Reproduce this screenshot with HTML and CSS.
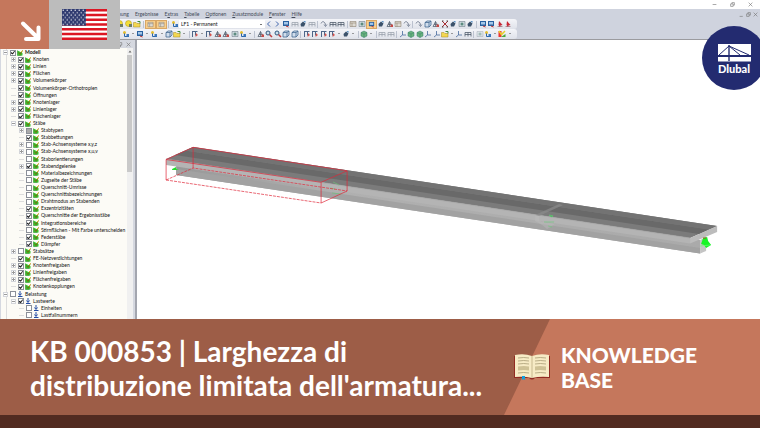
FILE: index.html
```html
<!DOCTYPE html>
<html lang="it">
<head>
<meta charset="utf-8">
<meta name="viewport" content="width=device-width, initial-scale=1">
<title>KB 000853 | Dlubal</title>
<link rel="stylesheet" href="styles.css">
</head>
<body>
<svg class="defs" aria-hidden="true">
  <symbol id="model" viewBox="0 0 12 12"><path d="M1 1v10h10V6z" fill="#35c52b"/><path d="M1 1v10h8" stroke="#14801c" fill="none"/><path d="M3 5l3 4 5-8" stroke="#7b6412" stroke-width="2" fill="none"/><path d="M8 4l3-3" stroke="#e5c22c" stroke-width="2"/></symbol>
  <symbol id="load" viewBox="0 0 12 12"><path d="M6 0v8M3 5l3 4 3-4M2 11h9" stroke="#244ca5" stroke-width="2" fill="none"/></symbol>
  <symbol id="coin" viewBox="0 0 16 16"><circle cx="7" cy="7" r="6" fill="#f3dd38" stroke="#a89016"/><path d="M8 8h6v6H8z" fill="#6d7d65"/></symbol>
  <symbol id="folder" viewBox="0 0 16 16"><path d="M1 5h5l2 2h6v7H1z" fill="#f3d750" stroke="#a48a20"/><path d="M9 3h5v4" stroke="#3e8b3c" stroke-width="2" fill="none"/></symbol>
  <symbol id="sheet" viewBox="0 0 16 16"><path d="M2 3h12v10H2z" fill="#dedbd4" stroke="#81735f"/><path d="M2 6h12M6 6v7" stroke="#81735f"/></symbol>
  <symbol id="node" viewBox="0 0 16 16"><circle cx="5" cy="5" r="3" fill="#e3bd2c"/><path d="M5 7v6h9" stroke="#2865a8" stroke-width="2" fill="none"/><path d="M9 8h5v5H9z" fill="#3d79bd"/></symbol>
  <symbol id="cube" viewBox="0 0 16 16"><path d="M2 5l4-3h8v8l-4 4H2zM2 5h8v9M10 5l4-3" fill="#d0ddec" stroke="#3c638d" stroke-width="1.5"/></symbol>
  <symbol id="bluebox" viewBox="0 0 16 16"><path d="M2 2h12v10H2z" fill="#2861a0"/><path d="M4 4h8v5H4z" fill="#a3c6e8"/><path d="M8 12l5 2" stroke="#bb3131" stroke-width="2"/></symbol>
  <symbol id="frame" viewBox="0 0 16 16"><path d="M2 13V5h12v8M2 9h12M8 5v8" fill="none" stroke="#4a5666" stroke-width="1.5"/></symbol>
  <symbol id="truss" viewBox="0 0 16 16"><path d="M2 13l5-10 6 10zM4 9h7M7 3v10" fill="none" stroke="#53606f" stroke-width="1.5"/><path d="M9 9h5v5H9z" fill="#c64a45"/></symbol>
  <symbol id="lens" viewBox="0 0 16 16"><circle cx="6" cy="6" r="4" fill="#c9e0ed" stroke="#34597e" stroke-width="2"/><path d="M9 9l5 5" stroke="#bd3b3c" stroke-width="3"/></symbol>
  <symbol id="redx" viewBox="0 0 16 16"><path d="M2 2l12 12M14 2L2 14" stroke="#a92f35" stroke-width="2"/><path d="M2 2h3M11 2h3M2 14h3M11 14h3" stroke="#444" stroke-width="2"/></symbol>
  <symbol id="redpin" viewBox="0 0 16 16"><path d="M6 2l7 8-4 1-1 3-3-4z" fill="#c82937"/><path d="M3 13h10" stroke="#763541"/></symbol>
  <symbol id="rotate" viewBox="0 0 16 16"><path d="M2 7c3-7 9-3 9 4M8 9l3 4 3-4" fill="none" stroke="#647085" stroke-width="1.6"/></symbol>
  <symbol id="axis" viewBox="0 0 16 16"><path d="M7 2v8h7M7 10l-5 4" fill="none" stroke="#466a9d" stroke-width="1.6"/></symbol>
  <symbol id="target" viewBox="0 0 16 16"><path d="M2 3h12v10H2z" fill="#ccd9dd" stroke="#60717d"/><circle cx="8" cy="8" r="3" fill="#5d8b80"/></symbol>
  <symbol id="dark" viewBox="0 0 16 16"><path d="M3 8l5-5 5 4-3 6H4z" fill="#3b526b"/><path d="M9 2h4v4" fill="#4b87c0"/></symbol>
  <symbol id="flag" viewBox="0 0 16 16"><path d="M3 2v12M3 3h10M9 3v8" stroke="#4e6789" stroke-width="2"/><path d="M10 6l4 4-5 4z" fill="#d6534b"/></symbol>
  <symbol id="green" viewBox="0 0 16 16"><path d="M2 5l6-3 6 3v7l-6 3-6-3z" fill="#69b37d" stroke="#347e68"/><path d="M2 5l6 3 6-3M8 8v7" stroke="#347e68" fill="none"/></symbol>
  <symbol id="colors" viewBox="0 0 16 16"><path d="M1 2h6v12H1z" fill="#e33"/><path d="M6 14h9V8z" fill="#4ba83a"/><path d="M2 2l5 7 7-7" stroke="#e9cf2a" stroke-width="3" fill="none"/></symbol>
</svg>

<main class="app">
  <header class="chrome">
    <div class="titlebar">
      <button aria-label="Minimieren"><svg viewBox="0 0 8 8"><path d="M1 4h6"/></svg></button>
      <button aria-label="Verkleinern"><svg viewBox="0 0 8 8"><path d="M1 3h4v4H1zM3 3V1h4v4H5"/></svg></button>
      <button aria-label="Schließen"><svg viewBox="0 0 8 8"><path d="M1 1l6 6M7 1L1 7"/></svg></button>
    </div>
    <nav class="menubar">
      <a href="#">nung</a><a href="#">Ergebnisse</a><a href="#">E<u>x</u>tras</a><a href="#"><u>T</u>abelle</a><a href="#"><u>O</u>ptionen</a><a href="#"><u>Z</u>usatzmodule</a><a href="#"><u>F</u>enster</a><a href="#"><u>H</u>ilfe</a>
      <span class="mdi"><svg viewBox="0 0 8 8"><path d="M1 7h5"/></svg><svg viewBox="0 0 8 8"><path d="M1 3h4v4H1zM3 3V1h4v4H5"/></svg><svg viewBox="0 0 8 8"><path d="M1 1l6 6M7 1L1 7"/></svg></span>
    </nav>
    <div class="toolbar">
      <button aria-label="Neu"><svg><use href="#coin"/></svg></button><button aria-label="Modell"><svg><use href="#coin"/></svg></button><button aria-label="Öffnen"><svg><use href="#folder"/></svg></button><i></i>
      <button class="on" aria-label="Navigator"><svg><use href="#sheet"/></svg></button><button class="on" aria-label="Tabelle"><svg><use href="#sheet"/></svg></button><i></i>
      <button aria-label="Lastfall"><svg><use href="#node"/></svg></button>
      <select aria-label="Lastfall wählen"><option>LF1 - Permanent</option></select>
      <button aria-label="Zurück"><svg viewBox="0 0 16 16"><path d="M10 3L5 8l5 5" class="arrow"/></svg></button><button aria-label="Weiter"><svg viewBox="0 0 16 16"><path d="M6 3l5 5-5 5" class="arrow"/></svg></button>
      <button aria-label="Lasten"><svg><use href="#bluebox"/></svg></button><button aria-label="Raster"><svg class="dim"><use href="#frame"/></svg></button><button aria-label="Werte"><svg><use href="#dark"/></svg></button><button aria-label="Maße"><svg class="dim"><use href="#frame"/></svg></button><i></i>
      <button aria-label="Verlauf"><svg><use href="#rotate"/></svg></button><button aria-label="Lager"><svg><use href="#frame"/></svg></button><button aria-label="Balken"><svg><use href="#frame"/></svg></button><i></i>
      <button aria-label="Liste"><svg><use href="#sheet"/></svg></button><button aria-label="Ansicht"><svg><use href="#target"/></svg></button><button class="on" aria-label="Rendern"><svg><use href="#bluebox"/></svg></button><button aria-label="Volumen"><svg><use href="#dark"/></svg></button><button aria-label="Kontakt"><svg><use href="#truss"/></svg></button><button aria-label="Drucken"><svg><use href="#sheet"/></svg></button><button aria-label="Bericht"><svg><use href="#rotate"/></svg></button><i></i>
      <button aria-label="Drehen"><svg><use href="#rotate"/></svg></button><button aria-label="Verschieben"><svg><use href="#cube"/></svg></button><button aria-label="Spiegeln"><svg><use href="#truss"/></svg></button><button aria-label="Löschen"><svg><use href="#redx"/></svg></button><button aria-label="Kugel"><svg><use href="#dark"/></svg></button><button aria-label="Ziel"><svg><use href="#target"/></svg></button><button aria-label="Verbinden"><svg><use href="#dark"/></svg></button><i></i>
      <button aria-label="Modul 1"><svg><use href="#bluebox"/></svg></button><button aria-label="Modul 2"><svg><use href="#bluebox"/></svg></button><button aria-label="Modul 3"><svg><use href="#redpin"/></svg></button><button aria-label="Modul 4"><svg><use href="#redpin"/></svg></button>
    </div>
    <div class="toolbar second">
      <button class="drop" aria-label="Knoten"><svg><use href="#node"/></svg></button><button class="drop" aria-label="Rahmen"><svg><use href="#bluebox"/></svg></button><button class="drop" aria-label="Linie"><svg><use href="#node"/></svg></button><button aria-label="Fläche"><svg><use href="#cube"/></svg></button><button class="drop" aria-label="Körper"><svg><use href="#folder"/></svg></button><i></i>
      <button class="drop" aria-label="Stab"><svg><use href="#flag"/></svg></button><button aria-label="Rippe"><svg><use href="#flag"/></svg></button><button aria-label="Fachwerk"><svg><use href="#truss"/></svg></button><button aria-label="Fachwerk 2"><svg><use href="#truss"/></svg></button><button aria-label="Seite"><svg><use href="#target"/></svg></button><button class="drop" aria-label="Gelenk"><svg><use href="#node"/></svg></button><i></i>
      <button aria-label="Auswahl"><svg><use href="#truss"/></svg></button><button aria-label="Zoom"><svg><use href="#lens"/></svg></button><button aria-label="Zoom plus"><svg><use href="#lens"/></svg></button><button aria-label="Würfel"><svg><use href="#cube"/></svg></button><button aria-label="Isometrie"><svg><use href="#cube"/></svg></button><i></i>
      <button aria-label="X"><svg><use href="#flag"/></svg></button><button aria-label="Y"><svg><use href="#flag"/></svg></button><button aria-label="Z"><svg><use href="#flag"/></svg></button><button class="drop" aria-label="-X"><svg><use href="#flag"/></svg></button><button class="drop" aria-label="Schnitt"><svg><use href="#dark"/></svg></button><i></i>
      <button class="drop" aria-label="Darstellung"><svg><use href="#green"/></svg></button><i></i><button aria-label="Profil"><svg class="dim"><use href="#frame"/></svg></button><button aria-label="Seil"><svg class="dim"><use href="#frame"/></svg></button><i></i>
      <button aria-label="Achse"><svg><use href="#axis"/></svg></button><button aria-label="Netz"><svg><use href="#green"/></svg></button><button aria-label="Netz 2"><svg><use href="#green"/></svg></button><button aria-label="Achse 2"><svg><use href="#axis"/></svg></button><button aria-label="Achse 3"><svg><use href="#axis"/></svg></button><button class="drop" aria-label="Ebene"><svg><use href="#folder"/></svg></button><button aria-label="Achse 4"><svg><use href="#axis"/></svg></button><button aria-label="Gitter"><svg><use href="#frame"/></svg></button><i></i>
      <button aria-label="Blatt"><svg class="dim"><use href="#target"/></svg></button><button class="drop" aria-label="Stift"><svg><use href="#node"/></svg></button><button class="drop" aria-label="Farben"><svg><use href="#colors"/></svg></button>
    </div>
  </header>

  <div class="workspace">
    <aside class="navigator">
      <div class="panel-head"><svg viewBox="0 0 8 8"><path d="M2 1h4v4H2zM4 5v3"/></svg><svg viewBox="0 0 8 8"><path d="M1 1l6 6M7 1L1 7"/></svg></div>
      <div class="panel-body">
        <ul class="tree">
          <li class="l0 root"><b class="open"></b><label><input type="checkbox" checked><svg><use href="#model"/></svg>Modell</label></li>
          <li class="l1"><b></b><label><input type="checkbox" checked><svg><use href="#model"/></svg>Knoten</label></li>
          <li class="l1"><b></b><label><input type="checkbox" checked><svg><use href="#model"/></svg>Linien</label></li>
          <li class="l1"><b></b><label><input type="checkbox" checked><svg><use href="#model"/></svg>Flächen</label></li>
          <li class="l1"><b></b><label><input type="checkbox" checked><svg><use href="#model"/></svg>Volumenkörper</label></li>
          <li class="l1"><b class="leaf"></b><label><input type="checkbox" checked><svg><use href="#model"/></svg>Volumenkörper-Orthotropien</label></li>
          <li class="l1"><b class="leaf"></b><label><input type="checkbox" checked><svg><use href="#model"/></svg>Öffnungen</label></li>
          <li class="l1"><b></b><label><input type="checkbox" checked><svg><use href="#model"/></svg>Knotenlager</label></li>
          <li class="l1"><b></b><label><input type="checkbox" checked><svg><use href="#model"/></svg>Linienlager</label></li>
          <li class="l1"><b class="leaf"></b><label><input type="checkbox" checked><svg><use href="#model"/></svg>Flächenlager</label></li>
          <li class="l1"><b class="open"></b><label><input type="checkbox" checked><svg><use href="#model"/></svg>Stäbe</label></li>
          <li class="l2"><b></b><label><input type="checkbox" class="mixed"><svg><use href="#model"/></svg>Stabtypen</label></li>
          <li class="l2"><b class="leaf"></b><label><input type="checkbox" checked><svg><use href="#model"/></svg>Stabbettungen</label></li>
          <li class="l2"><b></b><label><input type="checkbox"><svg><use href="#model"/></svg>Stab-Achsensysteme x,y,z</label></li>
          <li class="l2"><b></b><label><input type="checkbox"><svg><use href="#model"/></svg>Stab-Achsensysteme x,u,v</label></li>
          <li class="l2"><b class="leaf"></b><label><input type="checkbox"><svg><use href="#model"/></svg>Staborientierungen</label></li>
          <li class="l2"><b></b><label><input type="checkbox" checked><svg><use href="#model"/></svg>Stabendgelenke</label></li>
          <li class="l2"><b class="leaf"></b><label><input type="checkbox"><svg><use href="#model"/></svg>Materialbezeichnungen</label></li>
          <li class="l2"><b class="leaf"></b><label><input type="checkbox"><svg><use href="#model"/></svg>Zugseite der Stäbe</label></li>
          <li class="l2"><b class="leaf"></b><label><input type="checkbox"><svg><use href="#model"/></svg>Querschnitt-Umrisse</label></li>
          <li class="l2"><b class="leaf"></b><label><input type="checkbox"><svg><use href="#model"/></svg>Querschnittsbezeichnungen</label></li>
          <li class="l2"><b class="leaf"></b><label><input type="checkbox"><svg><use href="#model"/></svg>Drahtmodus an Stabenden</label></li>
          <li class="l2"><b class="leaf"></b><label><input type="checkbox" checked><svg><use href="#model"/></svg>Exzentrizitäten</label></li>
          <li class="l2"><b class="leaf"></b><label><input type="checkbox" checked><svg><use href="#model"/></svg>Querschnitte der Ergebnisstäbe</label></li>
          <li class="l2"><b class="leaf"></b><label><input type="checkbox" checked><svg><use href="#model"/></svg>Integrationsbereiche</label></li>
          <li class="l2"><b class="leaf"></b><label><input type="checkbox"><svg><use href="#model"/></svg>Stirnflächen - Mit Farbe unterscheiden</label></li>
          <li class="l2"><b class="leaf"></b><label><input type="checkbox" checked><svg><use href="#model"/></svg>Federstäbe</label></li>
          <li class="l2"><b class="leaf"></b><label><input type="checkbox" checked><svg><use href="#model"/></svg>Dämpfer</label></li>
          <li class="l1"><b></b><label><input type="checkbox"><svg><use href="#model"/></svg>Stabsätze</label></li>
          <li class="l1"><b class="leaf"></b><label><input type="checkbox" checked><svg><use href="#model"/></svg>FE-Netzverdichtungen</label></li>
          <li class="l1"><b></b><label><input type="checkbox" checked><svg><use href="#model"/></svg>Knotenfreigaben</label></li>
          <li class="l1"><b></b><label><input type="checkbox" checked><svg><use href="#model"/></svg>Linienfreigaben</label></li>
          <li class="l1"><b></b><label><input type="checkbox" checked><svg><use href="#model"/></svg>Flächenfreigaben</label></li>
          <li class="l1"><b class="leaf"></b><label><input type="checkbox" checked><svg><use href="#model"/></svg>Knotenkopplungen</label></li>
          <li class="l0"><b class="open"></b><label><input type="checkbox"><svg><use href="#load"/></svg>Belastung</label></li>
          <li class="l1"><b class="open"></b><label><input type="checkbox" checked><svg><use href="#load"/></svg>Lastwerte</label></li>
          <li class="l2"><b class="leaf"></b><label><input type="checkbox"><svg><use href="#load"/></svg>Einheiten</label></li>
          <li class="l2"><b class="leaf"></b><label><input type="checkbox"><svg><use href="#load"/></svg>Lastfallnummern</label></li>
        </ul>
        <div class="scroll"><svg viewBox="0 0 8 8"><path d="M1 6l3-4 3 4z"/></svg><span></span></div>
      </div>
    </aside>

    <section class="canvas" aria-label="3D-Modell">
      <svg viewBox="137 40 623 279" role="img" aria-label="Balken mit T-Querschnitt">
        <defs><linearGradient id="web" x1="0" x2="1"><stop stop-color="#989898"/><stop offset=".3" stop-color="#b0b0b0"/><stop offset="1" stop-color="#aaa"/></linearGradient></defs>
        <path d="M176 162L700 240v13.500L176 175z" fill="url(#web)"/>
        <path d="M176 169L700 248v5.500L176 175z" fill="#a2a2a2"/>
        <path d="M700 240l6-3v14l-6 2.500z" fill="#c4c4c4"/>
        <path d="M166 159L690 238v5.500L166 165z" fill="#b4b4b4"/>
        <path d="M166 159l27-12 524 79-27 12z" fill="#7b7b7b"/>
        <path d="M175 155l10-4.500 524 79-10 4.500z" fill="#696969"/>
        <path d="M185 150.500l8-3.500 524 79-8 3.500z" fill="#737373"/>
        <path d="M690 238l27-12v6l-27 11.500z" fill="#bcbcbc"/>
        <path d="M166 159L690 238" stroke="#a2a2a2" stroke-width=".6"/>
        <path d="M535 215l24-11 4 1-24 11z" fill="#8c8c8c" opacity=".7"/>
        <path d="M535 215l4 1v5l16 3-8 5-5-4-7-4z" fill="#bdbdbd" opacity=".4"/>
        <path d="M549 215l4 1-2 1zM544 222h10M548 226l4 1" fill="#38b653" stroke="#66cf75" stroke-width=".6"/>
        <path d="M172 169l4-2v2l3 1-7 0z" fill="#20dd29"/>
        <path d="M333 182l6 3M330 188l5 1M332 193l9 1" stroke="#6ec179" stroke-width=".7"/>
        <path d="M703 238l4-1 1 4 3 4-5 3-2-3-3-1z" fill="#18f526"/><path d="M700 246l10-1" stroke="#67ff71" stroke-width=".7"/><path d="M703 238h3" stroke="#a64c2b"/>
        <g fill="none" stroke="#e0283a" stroke-width=".7"><path d="M166 159.500L193 147.300l154 23.500-26 11.500zM166 159.500V180M321 182.500v20.500l26-12v-20M193 147.300v21"/><path d="M166 180l27-12 154 23M166 180l155 23" stroke-dasharray="3 1"/></g>
      </svg>
    </section>
  </div>

  <div class="badges">
    <div class="corner"><svg viewBox="0 0 49 49"><path d="M23 23.500l15 14.500M38.500 27.500v11.500H26" fill="none" stroke="#fff" stroke-width="4" stroke-linecap="round" stroke-linejoin="round"/></svg></div>
    <div class="country"><svg viewBox="0 0 45 31" role="img" aria-label="USA">
      <defs><pattern id="stars" width="4" height="4.800" patternUnits="userSpaceOnUse"><circle cx="1.200" cy="1.300" r=".7" fill="#fff"/><circle cx="3.200" cy="3.700" r=".7" fill="#fff"/></pattern></defs>
      <path d="M0 0h45v31H0z" fill="#fff"/><path d="M0 1.200h45M0 5.950h45M0 10.700h45M0 15.500h45M0 20.300h45M0 25.050h45M0 29.800h45" stroke="#dc1624" stroke-width="2.400"/><path d="M0 0h24v16.700H0z" fill="#303b70"/><path d="M0 0h24v16.700H0z" fill="url(#stars)"/></svg></div>
  </div>
  <div class="brand">
    <svg viewBox="0 0 33 18" aria-hidden="true"><path d="M0 0h33v11H0zM0 13h33v4.500H0z" fill="#fff"/><path d="M1 11L11 2l11 9M11 2l20 9" fill="none" stroke="#232b70"/><path d="M11 1v16" stroke="#232b70" stroke-width="1.400"/></svg>
    <span>Dlubal</span>
  </div>
</main>

<footer class="banner">
  <h1>KB 000853 | Larghezza di distribuzione limitata dell'armatura...</h1>
  <div class="category">
    <svg viewBox="0 0 38 28" aria-hidden="true"><path d="M1 3h36v22H22q-3 3-6 0H1z" fill="#912b22"/><path d="M2 2q9-2 17 1 8-3 17-1v22q-9-1-17 1-8-2-17-1z" fill="#f7ebc5"/><path d="M19 3v22" stroke="#c8b98f"/><path d="M5 5q6-1 11 0M5 8q6-1 11 0M5 11q6-1 11 0M5 20q6-1 11 0M22 5q5-1 11 0M22 8q5-1 11 0M22 11q5-1 11 0M22 20q5-1 11 0" fill="none" stroke="#b9ad86"/><path d="M5 13.500q6-1 11 0v4q-5-1-11 0zM22 13.500q5-1 11 0v4q-6-1-11 0z" fill="#cfc296"/><path d="M9 23h3v4l-1.500-1L9 27z" fill="#139fdc"/></svg>
    <strong>KNOWLEDGE<br>BASE</strong>
  </div>
</footer>
</body>
</html>
```
FILE: styles.css
```css
* { box-sizing: border-box; }
body {
  margin: 0;
  height: 100vh;
  display: flex;
  flex-direction: column;
  overflow: hidden;
  background: #fff;
  font-family: Lato, sans-serif;
  font-size: 5px;
  color: #111;
}
button { border: 0; padding: 0; background: none; }
.defs { position: absolute; width: 0; height: 0; }

.app {
  position: relative;
  flex: 1;
  min-height: 0;
  display: flex;
  flex-direction: column;
  overflow: hidden;
}
.chrome { background: #cfd3de; border-bottom: 1px solid #9b9b9f; }
.titlebar {
  height: 9px;
  display: flex;
  justify-content: flex-end;
  align-items: center;
  gap: 13px;
  padding-right: 7px;
  background: #fff;
}
.titlebar button { display: flex; }
.titlebar svg, .mdi svg, .panel-head svg { width: 5px; height: 5px; fill: none; stroke: #777; }
.menubar {
  height: 10px;
  display: flex;
  align-items: center;
  gap: 6px;
  padding: 0 2px 0 118px;
}
.menubar a { color: #444a58; text-decoration: none; }
.mdi { margin-left: auto; display: flex; gap: 2px; }

.toolbar {
  width: 68%;
  height: 10px;
  display: flex;
  align-items: center;
  padding: 0 4px 0 116px;
  background: linear-gradient(#f4f5f9, #dfe2ea);
  border-radius: 0 3px 3px 0;
}
.toolbar.second { padding-left: 122px; }
.toolbar button { flex: 9; min-width: 0; height: 9px; display: flex; align-items: center; justify-content: center; }
.toolbar svg { width: 8px; height: 8px; flex: none; }
.toolbar i { flex: 4; height: 7px; background: linear-gradient(#bcc2cf, #bcc2cf) center / 1px 100% no-repeat; }
.toolbar .on { background: #f8cf8d; border: 1px solid #d9a765; }
.toolbar .on svg { width: 7px; height: 7px; }
.toolbar .drop { flex: 13; justify-content: space-between; padding-right: 2px; }
.toolbar .drop::after { content: ""; border: 1px solid transparent; border-top-color: #444; }
.toolbar .arrow { fill: none; stroke: #4267ad; stroke-width: 2; }
.toolbar .dim { opacity: .5; }
.toolbar select {
  flex: 86;
  min-width: 0;
  height: 8px;
  padding: 0 2px;
  border: 0;
  appearance: none;
  background: linear-gradient(#777, #777) right 3px center / 2px 1px no-repeat #fff;
  font: 5px/8px Lato, sans-serif;
  color: #111;
}

.workspace { flex: 1; min-height: 0; display: flex; }
.navigator {
  width: 18%;
  display: flex;
  flex-direction: column;
  background: #d5d8e0;
  border-right: 2px solid #a3a6af;
}
.panel-head { height: 8px; display: flex; justify-content: flex-end; align-items: center; gap: 3px; padding-right: 4px; }
.panel-body { flex: 1; min-height: 0; display: flex; margin: 0 2px 0 1px; background: #fcfbf6; }
.tree {
  flex: 1;
  min-width: 0;
  margin: 0;
  padding: 1px 0 0;
  list-style: none;
  display: grid;
  grid-auto-rows: 1fr;
  background: linear-gradient(#ddd, #ddd) 5px 0 / 1px 100% no-repeat;
}
.tree li { display: flex; align-items: center; gap: 2px; min-height: 0; height: 7px; white-space: nowrap; }
.tree label { display: flex; align-items: center; gap: 1px; line-height: 7px; }
.tree svg { width: 6px; height: 6px; margin-right: 1px; }
.tree input {
  appearance: none;
  width: 6px;
  height: 6px;
  margin: 0;
  display: grid;
  place-items: center;
  border: 1px solid #8b8f98;
  background: #fff;
}
.tree input:checked::after { content: ""; width: 4px; height: 4px; background: #222; clip-path: polygon(0 40%, 40% 60%, 90% 0, 100% 20%, 45% 100%, 0 75%); }
.tree .mixed { background: #aaa; }
.tree b { width: 5px; height: 5px; border: 1px solid #d3d5da; background: linear-gradient(#999, #999) center / 1px 3px no-repeat, linear-gradient(#999, #999) center / 3px 1px no-repeat #fff; }
.tree .open { background: linear-gradient(#999, #999) center / 3px 1px no-repeat #fff; }
.tree .leaf { height: 1px; border: 0; background: #ddd; }
.l0 { padding-left: 2px; }
.l1 { padding-left: 10px; }
.l2 { padding-left: 18px; }
.root { font-weight: 700; }
.scroll { width: 6px; display: flex; flex-direction: column; align-items: center; background: #f0f0f0; }
.scroll svg { width: 4px; height: 7px; fill: #666; }
.scroll span { width: 5px; height: 43%; background: #c9c9c9; }
.canvas { flex: 1; min-width: 0; background: #fff; }
.canvas svg { display: block; width: 100%; height: 100%; }

.badges { position: absolute; top: 0; left: 0; display: flex; }
.corner { width: 49px; height: 49px; background: #c5775c; }
.corner svg { display: block; }
.country { width: 71px; height: 49px; padding: 9px 13px; background: #bcbcbc; }
.country svg { display: block; width: 45px; height: 31px; }
.brand {
  position: absolute;
  top: 26px;
  right: -6px;
  width: 64px;
  height: 64px;
  display: flex;
  flex-direction: column;
  align-items: center;
  padding-top: 18px;
  border-radius: 50%;
  background: #232b70;
  color: #fff;
  font: 900 11px/14px Lato, sans-serif;
}
.brand svg { width: 33px; height: 18px; }

.banner {
  display: flex;
  align-items: stretch;
  background: #9d5d47;
  border-bottom: 13px solid #522b21;
  color: #fff;
}
.banner h1 {
  flex: 1;
  margin: 0;
  padding: 15px 20px 13px 30px;
  font: 700 28px/34px Lato, sans-serif;
}
.category {
  position: relative;
  flex: 0 0 256px;
  display: flex;
  align-items: center;
  gap: 10px;
  padding-left: 9px;
}
.category::before {
  content: "";
  position: absolute;
  inset: 0;
  background: #c5775c;
  clip-path: polygon(46px 0, 100% 0, 100% 100%, 0 100%);
}
.category svg { position: relative; width: 38px; height: 28px; }
.category strong { position: relative; font: 900 21px/25px Lato, sans-serif; }
```
